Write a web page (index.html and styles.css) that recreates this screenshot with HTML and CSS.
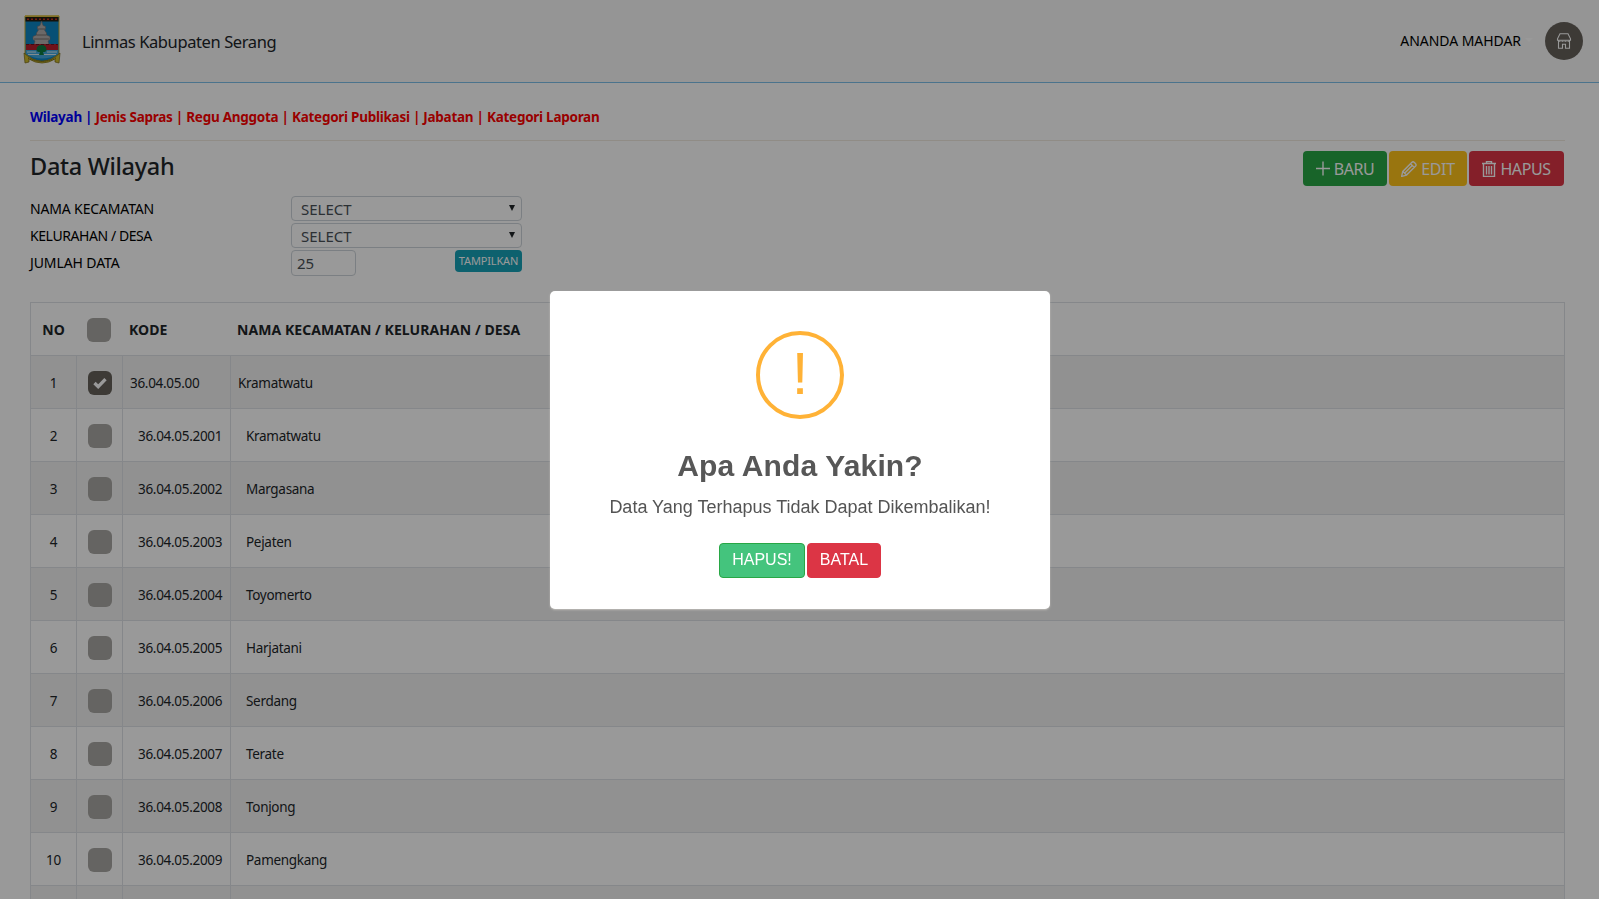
FILE: index.html
```html
<!DOCTYPE html>
<html lang="id">
<head>
<meta charset="utf-8">
<title>Linmas Kabupaten Serang</title>
<link rel="stylesheet" href="styles.css">
</head>
<body>
<header class="topbar">
  <svg class="logo" width="38" height="50" viewBox="0 0 38 50">
    <path d="M2 1h34v38q-8 7-17 8Q10 46 2 39z" fill="#0d86c4" stroke="#c9a92c"/>
    <path d="M2.500 1.500h33v5h-33z" fill="#241d10"/>
    <path d="M2 1.200h34" stroke="#d8be3d" stroke-width="1.400"/>
    <path d="M4 4.300h30" stroke="#c42f20" stroke-width="1.500" stroke-dasharray="2 2"/>
    <path d="M18.500 6l1.500 4.500 2.500 1v2.500l-1 1 2 3v2l3.500 1.500v3l-2 1.500 1 3.500h-15l1-3.500-2-1.500v-3l3.500-1.500v-2l2-3-1-1V11.500l2.500-1z" fill="#b5afad" stroke="#77706e" stroke-width=".6"/>
    <path d="M11 24h15M13.500 20h10M15 14h7" stroke="#77706e"/>
    <path d="M3 29h32v6H3z" fill="#b81e2c"/>
    <path d="M3 29.500h32" stroke="#6b1520" stroke-dasharray="3 2"/>
    <path d="M3 35h32v4q-16 9-32 0z" fill="#42a9df"/>
    <path d="M4 37h9M24 37h10M5 39.500h28" stroke="#d7e8ef"/>
    <path d="M13.500 35q0-5 5-5t5 5q0 2-3.500 2l1 3h-5l1-3q-3.500 0-3.500-2z" fill="#0a7c40"/>
    <path d="M1 38q8 8 18 8t18-8l-1 10-4-1v-3q-6 4-13 4T6 44v3l-4 1z" fill="#cdbb2d" stroke="#756616" stroke-width=".7"/>
    <path d="M5 43q14 7 28 0" fill="none" stroke="#5c5114" stroke-dasharray="1 1"/>
  </svg>
  <span class="brand">Linmas Kabupaten Serang</span>
  <span class="user">ANANDA MAHDAR</span>
  <span class="caret"></span>
  <span class="avatar">
    <svg width="16" height="16" viewBox="0 0 16 16" fill="none" stroke="#fff" stroke-width="1.100">
      <path d="M4 .8h8l2.500 5v1.500h-13V5.800zM2.500 7.500v7.700h4v-4h3v4h4V7.500"/><path d="M2.500 8.300h11" stroke-dasharray="2 1"/>
    </svg>
  </span>
</header>
<main class="page">
  <nav class="tabs"><a class="on">Wilayah |</a> <a>Jenis Sapras |</a> <a>Regu Anggota |</a> <a>Kategori Publikasi |</a> <a>Jabatan |</a> <a>Kategori Laporan</a></nav>
  <div class="titlebar">
    <h1>Data Wilayah</h1>
    <div class="actions">
      <button class="btn green"><svg width="14" height="15" viewBox="0 0 14 15"><path d="M7 .5v14M0 7.500h14"/></svg><span>BARU</span></button>
      <button class="btn amber"><svg width="16" height="16" viewBox="0 0 16 16"><path d="M.6 15.400l1.200-5L10.700 1.500q1.300-1.300 2.700 0l1 1q1.400 1.400 0 2.700L5.500 14.100zM2 10.500l3.400 3.500M9.500 2.700l3.800 3.800M4 11.800l7.500-7.500"/></svg><span>EDIT</span></button>
      <button class="btn red"><svg width="14" height="16" viewBox="0 0 14 16"><path d="M0 2.500h14M4.500 2.500v-2h5v2M1.500 2.500v13h11v-13M4.500 5v8.500M7 5v8.500M9.500 5v8.500"/></svg><span>HAPUS</span></button>
    </div>
  </div>
  <form class="filter">
    <label class="l1">NAMA KECAMATAN</label><div class="select"><span>SELECT</span><i></i></div>
    <label class="l2">KELURAHAN / DESA</label><div class="select"><span>SELECT</span><i></i></div>
    <label class="l3">JUMLAH DATA</label><div class="last"><div class="num">25</div><div class="show"><span>TAMPILKAN</span></div></div>
  </form>
  <div class="grid">
    <div class="row head"><span class="no">NO</span><span class="ck"><b></b></span><span class="kode">KODE</span><span class="nama">NAMA KECAMATAN / KELURAHAN / DESA</span></div>
    <div class="row parent"><span class="no">1</span><span class="ck"><b class="sel"><svg width="14" height="12" viewBox="0 0 14 12"><path d="M1.500 6l3.700 3.700L12.500 2.200" fill="none" stroke="#fff" stroke-width="3.300"/></svg></b></span><span class="kode">36.04.05.00</span><span class="nama">Kramatwatu</span></div>
    <div class="row"><span class="no">2</span><span class="ck"><b></b></span><span class="kode">36.04.05.2001</span><span class="nama">Kramatwatu</span></div>
    <div class="row"><span class="no">3</span><span class="ck"><b></b></span><span class="kode">36.04.05.2002</span><span class="nama">Margasana</span></div>
    <div class="row"><span class="no">4</span><span class="ck"><b></b></span><span class="kode">36.04.05.2003</span><span class="nama">Pejaten</span></div>
    <div class="row"><span class="no">5</span><span class="ck"><b></b></span><span class="kode">36.04.05.2004</span><span class="nama">Toyomerto</span></div>
    <div class="row"><span class="no">6</span><span class="ck"><b></b></span><span class="kode">36.04.05.2005</span><span class="nama">Harjatani</span></div>
    <div class="row"><span class="no">7</span><span class="ck"><b></b></span><span class="kode">36.04.05.2006</span><span class="nama">Serdang</span></div>
    <div class="row"><span class="no">8</span><span class="ck"><b></b></span><span class="kode">36.04.05.2007</span><span class="nama">Terate</span></div>
    <div class="row"><span class="no">9</span><span class="ck"><b></b></span><span class="kode">36.04.05.2008</span><span class="nama">Tonjong</span></div>
    <div class="row"><span class="no">10</span><span class="ck"><b></b></span><span class="kode">36.04.05.2009</span><span class="nama">Pamengkang</span></div>
    <div class="row"><span class="no"></span><span class="ck"></span><span class="kode"></span><span class="nama"></span></div>
  </div>
</main>
<div class="overlay">
  <div class="modal">
    <div class="warn">!</div>
    <h2>Apa Anda Yakin?</h2>
    <p>Data Yang Terhapus Tidak Dapat Dikembalikan!</p>
    <div class="choices"><button class="ok">HAPUS!</button><button class="cancel">BATAL</button></div>
  </div>
</div>
</body>
</html>
```
FILE: styles.css
```css
* { box-sizing: border-box; }
html, body { height: 100%; }
body { margin: 0; overflow: hidden; background: #fff; font: 14px/20px "Noto Sans", "Open Sans", sans-serif; color: #212529; }
button { font-family: inherit; margin: 0; cursor: pointer; }

.topbar { height: 83px; display: flex; align-items: center; background: #f8f8f8; border-bottom: 1px solid #7dc0ea; padding: 0 16px 0 23px; }
.logo { flex: none; margin-top: -2px; }
.brand { margin: 2px 0 0 21px; font-size: 16.500px; letter-spacing: -.4px; }
.user { margin-left: auto; color: #000; font-size: 14px; letter-spacing: -.05px; }
.caret { margin: -2px 12px 0 4px; border: 4px solid transparent; border-top-color: #fff; border-bottom: 0; }
.avatar { width: 38px; height: 38px; border-radius: 50%; background: #66615b; display: grid; place-items: center; margin-top: -1px; }

.page { padding: 24px 34px 0 30px; }
.tabs { height: 34px; border-bottom: 1px solid #f1eae0; font-weight: 700; font-size: 13.500px; line-height: 21px; letter-spacing: -.27px; white-space: nowrap; color: #f00; }
.tabs .on { color: #00f; }
.titlebar { display: flex; justify-content: space-between; height: 55px; padding-top: 10px; }
h1 { margin: -1px 0 0; font-size: 23.500px; line-height: 32px; font-weight: 500; letter-spacing: -.3px; }
.actions { display: flex; gap: 2px; margin-right: 1px; }
.btn { height: 35px; border: 0; border-radius: 4px; color: #fff; font-size: 16px; letter-spacing: -.4px; padding: 0; display: flex; align-items: center; justify-content: center; gap: 4px; }
.btn svg { fill: none; stroke: #fff; stroke-width: 1.400; }
.green { width: 84px; background: #28a745; }
.amber { width: 78px; background: #ffc31a; }
.red { width: 95px; background: #dc3545; }

.filter { display: grid; grid-template-columns: 261px 231px; grid-template-rows: 25px 25px 26px; row-gap: 2px; color: #000; margin: 0; }
.filter label { line-height: 26px; }
.filter .l1 { letter-spacing: -.15px; }
.filter .l2 { letter-spacing: -.42px; }
.filter .l3 { letter-spacing: -.1px; }
.select { border: 1px solid #ced4da; border-radius: 4px; display: flex; justify-content: space-between; align-items: center; padding: 1px 6px 0 9px; color: #495057; font-size: 15px; }
.select i { border: 3px solid transparent; border-top: 6px solid #212529; border-bottom: 0; margin-top: -3px; }
.last { display: flex; justify-content: space-between; align-items: flex-start; }
.num { width: 65px; height: 26px; border: 1px solid #ced4da; border-radius: 4px; padding: 1px 5px; line-height: 23px; font-size: 15px; color: #495057; }
.show { width: 67px; height: 22px; border-radius: 4px; background: #17a2b8; color: #fff; font-size: 11px; line-height: 22px; letter-spacing: -.15px; text-align: center; }

.grid { margin-top: 26px; border: 1px solid #dee2e6; border-bottom: 0; width: 1535px; }
.row { height: 53px; border-bottom: 1px solid #dee2e6; display: grid; grid-template-columns: 46px 46px 108px 1fr; font-size: 13.500px; letter-spacing: -.3px; }
.row:nth-child(even) { background: #f2f2f2; }
.row span { display: flex; align-items: center; border-right: 1px solid #dee2e6; padding: 2px 0 0 15px; white-space: nowrap; }
.row .no, .row .ck { justify-content: center; padding-left: 0; }
.row .nama { border-right: 0; }
.row.parent .kode, .row.parent .nama { padding-left: 7px; }
.row.head span { border-right-color: transparent; font-weight: 700; font-size: 14px; letter-spacing: .06px; }
.row.head .kode, .row.head .nama { padding-left: 6px; }
.row.head .ck { padding-right: 2px; }
.ck b { width: 24px; height: 24px; border-radius: 6px; background: #a9a7a3; display: grid; place-items: center; }
.ck .sel { background: #66615b; }

.overlay { position: fixed; inset: 0; background: rgba(0, 0, 0, .4); display: flex; align-items: center; justify-content: center; font-family: "Liberation Sans", Arial, sans-serif; }
.modal { width: 500px; height: 318px; margin-left: 1px; background: #fff; border-radius: 5px; padding-top: 40px; display: flex; flex-direction: column; align-items: center; box-shadow: 0 1px 2px rgba(255, 250, 240, .4); }
.warn { width: 88px; height: 88px; border: 4px solid #ffb236; border-radius: 50%; color: #ffb236; font-size: 60px; line-height: 77px; text-align: center; }
h2 { margin: 27px 0 0; font-size: 30px; line-height: 40px; color: #575757; letter-spacing: .15px; }
.modal p { margin: 8px 0 0; font-size: 18px; line-height: 27px; color: #545454; }
.choices { display: flex; gap: 2px; margin-top: 22px; }
.choices button { height: 35px; border-radius: 4px; color: #fff; font-size: 16px; padding: 0; }
.ok { width: 86px; background: #44c47d; border: 1px solid #28a745; }
.cancel { width: 74px; background: #dc3545; border: 1px solid #dc3545; }
```
